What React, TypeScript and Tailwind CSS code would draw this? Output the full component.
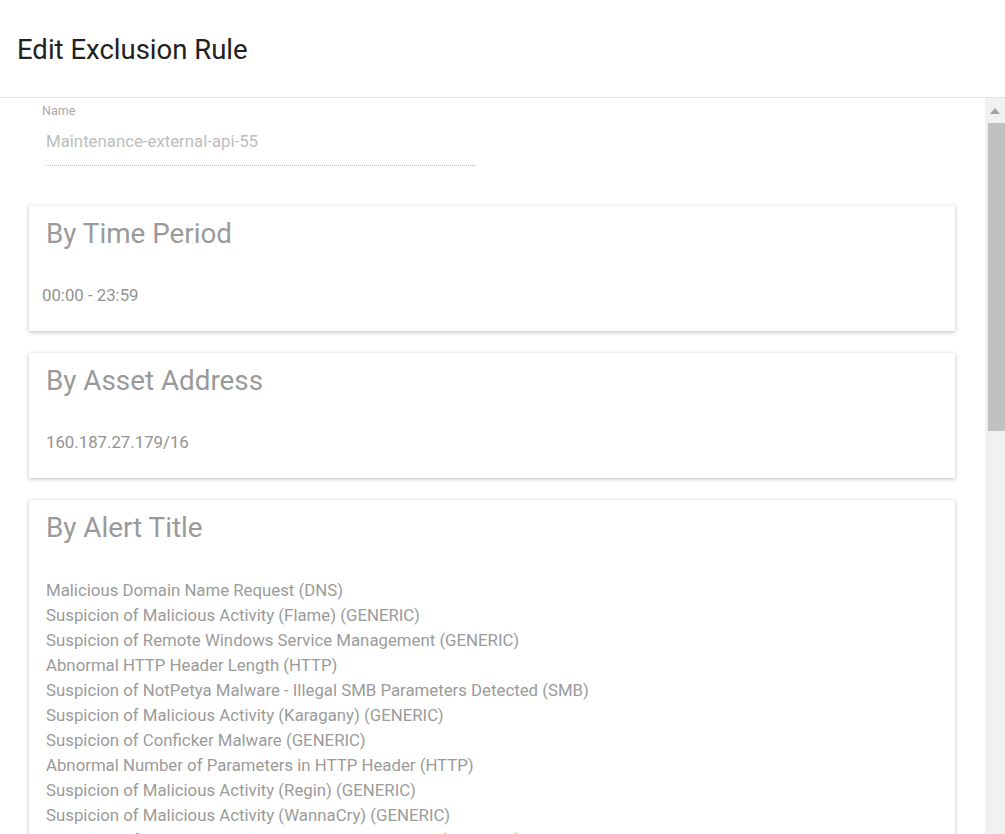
const alerts = [
  "Malicious Domain Name Request (DNS)",
  "Suspicion of Malicious Activity (Flame) (GENERIC)",
  "Suspicion of Remote Windows Service Management (GENERIC)",
  "Abnormal HTTP Header Length (HTTP)",
  "Suspicion of NotPetya Malware - Illegal SMB Parameters Detected (SMB)",
  "Suspicion of Malicious Activity (Karagany) (GENERIC)",
  "Suspicion of Conficker Malware (GENERIC)",
  "Abnormal Number of Parameters in HTTP Header (HTTP)",
  "Suspicion of Malicious Activity (Regin) (GENERIC)",
  "Suspicion of Malicious Activity (WannaCry) (GENERIC)",
  "Suspicion of Unauthorized Access Malicious Activity (GENERIC)",
  "Suspicion of Denial of Service Attack (GENERIC)",
];

function Card({ title, children }: { title: string; children: React.ReactNode }) {
  return (
    <section className="bg-white shadow-[0_1px_4px_rgba(0,0,0,0.28)]">
      <h2 className="px-[17px] pt-[12px] text-[27.8px] leading-[32px] text-[#9a9a9a]">{title}</h2>
      {children}
    </section>
  );
}

function FakeScrollbar() {
  return (
    <div className="w-[20px] shrink-0 bg-[#f1f1f1] flex flex-col items-center">
      <div className="h-[25px] flex items-center justify-center">
        <svg width="10" height="6" viewBox="0 0 10 6">
          <path d="M0 6 L5 0 L10 6 Z" fill="#a3a3a3" />
        </svg>
      </div>
      <div className="ml-[2px] w-[17px] h-[308px] bg-[#c1c1c1]" />
    </div>
  );
}

export default function App() {
  return (
    <div className="h-[834px] w-full overflow-hidden bg-white font-['Roboto','Liberation_Sans',sans-serif]">
      <header className="h-[98px] border-b border-[#e0e0e0] flex items-center px-[17px]">
        <h1 className="text-[27.5px] leading-[32px] text-[#212121] mt-[3px]">Edit Exclusion Rule</h1>
      </header>
      <div className="flex h-[736px]">
        <main className="flex-1 overflow-hidden pl-[29px] pr-[30px]">
          <div className="pl-[13px] pt-[5px]">
            <label className="block text-[12.5px] leading-[16px] text-[#aaaaaa]">Name</label>
            <div className="ml-[4px] mt-[10px] w-[429px] pb-[12px] border-b border-dotted border-[#bdbdbd] text-[16.8px] leading-[24px] text-[#bdbdbd]">
              Maintenance-external-api-55
            </div>
          </div>

          <div className="mt-[40px] flex flex-col gap-[22px]">
            <Card title="By Time Period">
              <p className="px-[13px] pt-[33px] pb-[24px] text-[16.8px] leading-[24px] text-[#939393]">00:00 - 23:59</p>
            </Card>
            <Card title="By Asset Address">
              <p className="px-[17px] pt-[33px] pb-[24px] text-[16.8px] leading-[24px] text-[#939393]">160.187.27.179/16</p>
            </Card>
            <Card title="By Alert Title">
              <ul className="px-[17px] pt-[34px] pb-[24px] text-[16.8px] leading-[25px] text-[#9b9b9b]">
                {alerts.map((a) => (
                  <li key={a}>{a}</li>
                ))}
              </ul>
            </Card>
          </div>
        </main>
        <FakeScrollbar />
      </div>
    </div>
  );
}
